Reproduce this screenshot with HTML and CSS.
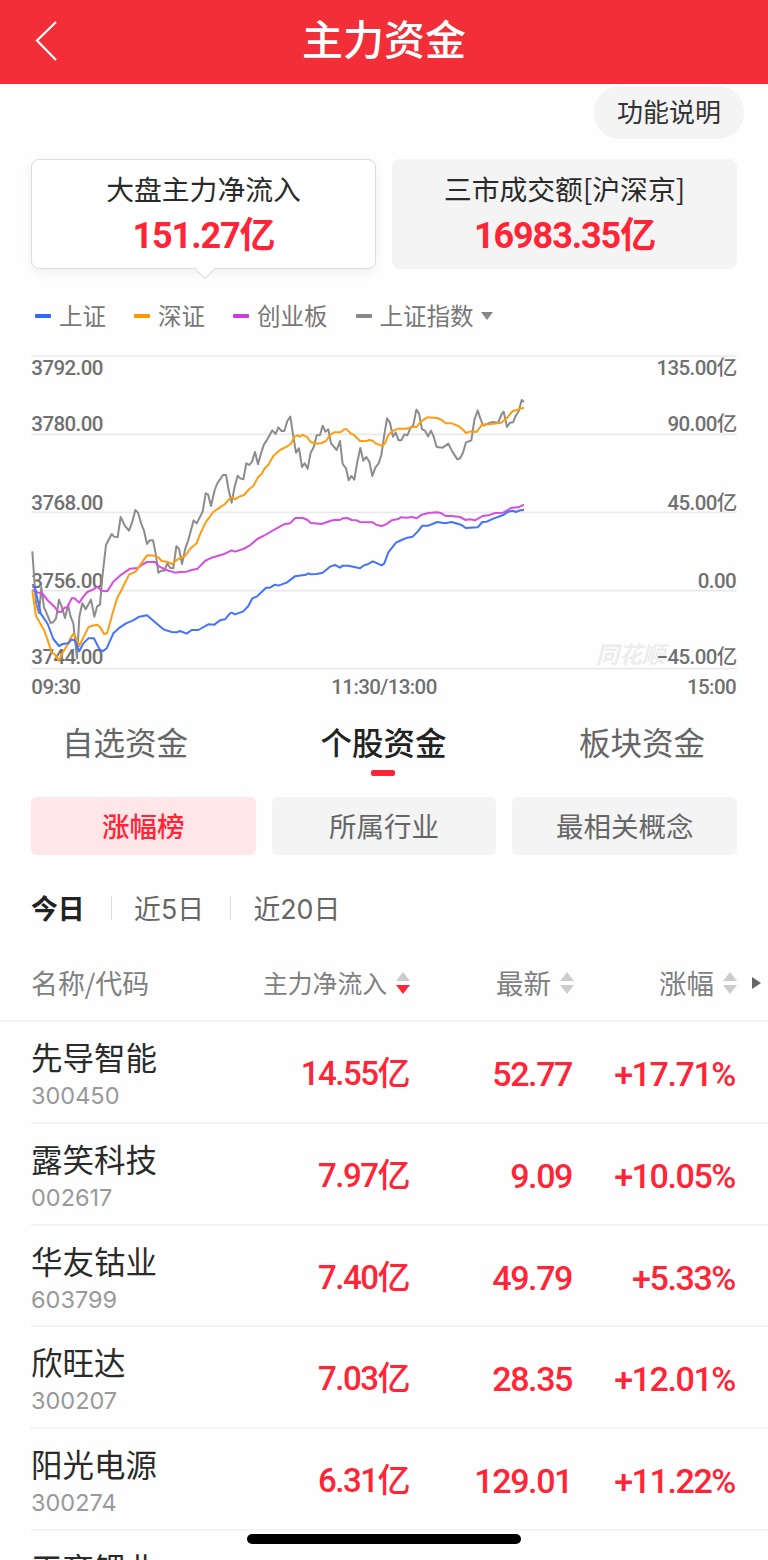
FILE: index.html
```
<!DOCTYPE html>
<html lang="zh-CN">
<head>
    <meta charset="UTF-8">
    <meta name="viewport" content="width=device-width, initial-scale=1.0">
    <title>主力资金</title>
    <link rel="stylesheet" href="styles.css">
</head>
<body>

<div class="page">
    <header class="header">
        <svg class="back" width="24" height="42" viewBox="0 0 24 42"><path d="M22 2 L3 20.500 L22 40"/></svg>
        <h1>主力资金</h1>
    </header>

    <div class="help"><button class="btn-help">功能说明</button></div>

    <!-- Summary cards -->
    <div class="cards">
        <div class="card active">
            <div class="card-title">大盘主力净流入</div>
            <div class="card-value">151.27亿</div>
        </div>
        <div class="card">
            <div class="card-title">三市成交额[沪深京]</div>
            <div class="card-value">16983.35亿</div>
        </div>
    </div>

    <div class="legend">
        <span class="item blue">上证</span>
        <span class="item orange">深证</span>
        <span class="item purple">创业板</span>
        <span class="item gray">上证指数<i class="caret"></i></span>
    </div>

    <!-- Chart -->
    <svg class="chart" width="768" height="360" viewBox="0 0 2304 1080">
        <g class="grid">
            <path d="M94 48H2210M94 283H2210M94 517H2210M94 752H2210M94 986H2210"/>
        </g>
        <text class="watermark" x="1788" y="968">同花顺</text>
        <g class="labels">
            <text x="94" y="104">3792.00</text>
            <text x="94" y="274">3780.00</text>
            <text x="94" y="509">3768.00</text>
            <text x="94" y="743">3756.00</text>
            <text x="94" y="972">3744.00</text>
            <text x="94" y="1061">09:30</text>
        </g>
        <g class="labels middle">
            <text x="1152" y="1061">11:30/13:00</text>
        </g>
        <g class="labels end">
            <text x="2210" y="104">135.00亿</text>
            <text x="2210" y="274">90.00亿</text>
            <text x="2210" y="509">45.00亿</text>
            <text x="2208" y="743">0.00</text>
            <text x="2210" y="972">−45.00亿</text>
            <text x="2208" y="1061">15:00</text>
        </g>
        <polyline class="line line-gray" points="97,634 103,720 108,790 117,820 124,742 132,802 140,820 152,849 160,846 168,835 177,779 186,803 195,834 204,795 212,830 220,850 231,955 238,830 247,790 257,808 273,779 283,830 291,800 300,794 306,720 318,615 335,582 342,590 353,591 362,531 375,558 387,572 397,545 406,510 414,518 424,552 432,572 441,612 449,601 459,601 467,640 475,698 484,692 493,692 502,670 510,683 520,685 529,619 537,626 546,672 556,625 565,600 581,541 590,550 608,515 617,460 624,463 633,498 644,450 652,430 669,405 678,405 686,450 695,488 704,440 713,407 721,415 730,418 739,370 748,375 756,365 765,336 774,373 783,340 792,313 802,298 817,271 827,282 835,262 845,273 853,273 862,243 871,230 880,290 888,338 897,325 906,381 914,370 923,386 932,338 941,322 950,286 960,285 968,257 976,275 985,268 993,310 1010,330 1020,303 1028,372 1038,385 1046,421 1054,408 1063,419 1072,365 1081,324 1090,362 1099,351 1108,365 1117,408 1126,383 1136,370 1144,345 1152,290 1161,235 1170,248 1179,290 1187,278 1196,301 1204,301 1213,283 1222,286 1231,265 1240,255 1249,209 1257,220 1266,268 1275,272 1284,289 1293,272 1301,290 1310,321 1328,323 1345,311 1357,335 1372,358 1380,355 1389,338 1398,307 1414,301 1423,240 1433,211 1442,238 1450,257 1465,250 1480,246 1494,249 1505,222 1511,215 1521,261 1530,248 1539,247 1547,228 1556,214 1565,180 1572,186"/>
        <polyline class="line line-purple" points="97,750 113,757 128,762 145,783 165,802 175,816 184,815 194,803 202,802 215,775 223,775 238,788 250,770 262,756 280,748 292,740 305,752 322,754 340,725 360,707 390,686 413,684 430,672 441,666 465,666 478,680 500,690 525,698 540,696 560,695 575,690 593,686 615,663 635,653 670,643 695,631 705,635 730,627 750,616 772,597 790,588 830,565 852,553 870,550 886,534 908,534 923,540 932,549 965,552 990,543 1005,539 1020,540 1028,535 1042,534 1055,540 1070,541 1080,546 1118,547 1130,555 1145,558 1158,553 1175,541 1195,537 1202,532 1220,533 1237,531 1250,535 1265,524 1285,519 1312,517 1325,520 1337,528 1355,528 1380,531 1397,540 1410,538 1425,541 1448,528 1465,526 1485,519 1510,518 1535,503 1555,502 1572,494"/>
        <polyline class="line line-orange" points="97,752 108,828 118,845 133,872 143,900 154,935 166,945 177,962 188,938 202,915 212,893 221,881 231,900 238,918 250,893 265,862 276,857 292,854 302,864 312,882 321,880 329,853 337,822 352,773 363,753 387,704 407,695 424,670 441,646 463,647 475,652 485,663 500,665 517,672 530,660 555,648 572,625 590,610 600,583 617,547 640,516 660,502 675,492 685,480 696,471 705,478 718,470 732,465 748,447 760,438 774,412 785,402 793,387 806,373 820,348 840,330 860,320 872,312 884,290 893,286 900,290 907,284 922,292 932,306 950,311 965,309 978,303 990,285 1002,277 1022,277 1033,268 1040,268 1052,280 1062,285 1080,303 1100,303 1108,300 1118,302 1126,310 1145,317 1155,310 1165,285 1178,273 1195,266 1218,266 1240,260 1250,261 1262,245 1282,232 1312,234 1325,240 1338,250 1355,250 1375,258 1388,268 1398,279 1412,274 1430,276 1446,254 1475,252 1504,248 1520,235 1538,213 1552,210 1560,206 1572,203"/>
        <polyline class="line line-blue" points="97,740 105,742 112,775 122,820 143,852 160,897 177,918 188,912 205,910 215,898 225,902 238,934 250,910 265,895 282,895 292,915 300,930 310,933 320,925 340,880 360,862 378,850 398,842 418,830 441,826 460,842 490,868 515,876 530,877 540,873 560,881 575,870 595,870 625,853 643,854 660,841 675,838 690,820 695,818 705,823 730,814 745,798 757,775 770,770 798,743 810,743 825,734 835,737 860,728 885,709 918,704 925,700 932,703 950,702 968,698 990,680 1005,675 1020,683 1028,677 1045,677 1080,685 1090,677 1105,672 1118,664 1132,670 1145,676 1153,670 1165,637 1188,608 1205,600 1222,593 1238,590 1253,575 1267,557 1285,557 1312,546 1335,550 1355,546 1383,554 1397,564 1433,562 1447,546 1460,545 1480,536 1510,525 1525,515 1538,512 1547,516 1560,511 1572,510"/>
    </svg>

    <!-- Tabs -->
    <nav class="tabs">
        <span>自选资金</span>
        <span class="active">个股资金</span>
        <span>板块资金</span>
    </nav>

    <div class="chips">
        <button class="chip active">涨幅榜</button>
        <button class="chip">所属行业</button>
        <button class="chip">最相关概念</button>
    </div>

    <div class="periods">
        <span class="active">今日</span>
        <span>近5日</span>
        <span>近20日</span>
    </div>

    <!-- Stock list -->
    <div class="row table-head">
        <div class="title">名称/代码</div>
        <div class="num flow">主力净流入<svg class="sort desc" width="14" height="24" viewBox="0 0 14 24"><path class="up" d="M7 1L14 10H0Z"/><path class="down" d="M7 23L14 14H0Z"/></svg></div>
        <div class="num">最新<svg class="sort" width="14" height="24" viewBox="0 0 14 24"><path class="up" d="M7 1L14 10H0Z"/><path class="down" d="M7 23L14 14H0Z"/></svg></div>
        <div class="num">涨幅<svg class="sort" width="14" height="24" viewBox="0 0 14 24"><path class="up" d="M7 1L14 10H0Z"/><path class="down" d="M7 23L14 14H0Z"/></svg></div>
        <i class="more"></i>
    </div>

    <div class="list">
        <div class="row stock">
            <div><div class="name">先导智能</div><div class="code">300450</div></div>
            <div class="num flow">14.55亿</div><div class="num">52.77</div><div class="num">+17.71%</div>
        </div>
        <div class="row stock">
            <div><div class="name">露笑科技</div><div class="code">002617</div></div>
            <div class="num flow">7.97亿</div><div class="num">9.09</div><div class="num">+10.05%</div>
        </div>
        <div class="row stock">
            <div><div class="name">华友钴业</div><div class="code">603799</div></div>
            <div class="num flow">7.40亿</div><div class="num">49.79</div><div class="num">+5.33%</div>
        </div>
        <div class="row stock">
            <div><div class="name">欣旺达</div><div class="code">300207</div></div>
            <div class="num flow">7.03亿</div><div class="num">28.35</div><div class="num">+12.01%</div>
        </div>
        <div class="row stock">
            <div><div class="name">阳光电源</div><div class="code">300274</div></div>
            <div class="num flow">6.31亿</div><div class="num">129.01</div><div class="num">+11.22%</div>
        </div>
        <div class="row stock">
            <div><div class="name">天齐锂业</div></div>
        </div>
    </div>

    <div class="home-bar"></div>
</div>

</body>
</html>
```
FILE: styles.css
```
* {
    box-sizing: border-box;
}
body {
    margin: 0;
    font-family: "Noto Sans CJK SC", sans-serif;
    background-color: #fefefe;
    color: #2a2a2a;
}
button {
    font-family: inherit;
    border: none;
    padding: 0;
}
.page {
    position: relative;
    width: 768px;
    height: 1560px;
    overflow: hidden;
}
.header {
    height: 84px;
    display: grid;
    grid-template-columns: 96px 1fr 96px;
    align-items: center;
    background-color: #f22f38;
    color: #fff;
}
.header h1 {
    margin: 0;
    padding-bottom: 10px;
    text-align: center;
    font-size: 41px;
    line-height: 56px;
    font-weight: 500;
}
.back {
    margin-left: 34px;
    margin-top: -2px;
    fill: none;
    stroke: #fff;
    stroke-width: 2.2;
}
.help {
    height: 75px;
    padding: 2px 24px 0;
    text-align: right;
}
.btn-help {
    width: 150px;
    height: 53px;
    padding-bottom: 4px;
    border-radius: 26px;
    background-color: #f4f4f4;
    color: #333;
    font-size: 26px;
    line-height: 49px;
}
.cards {
    display: grid;
    grid-template-columns: 1fr 1fr;
    gap: 16px;
    padding: 0 31px;
}
.card {
    position: relative;
    height: 110px;
    padding-top: 8px;
    border: 1px solid #f4f4f4;
    border-radius: 8px;
    background-color: #f4f4f4;
    text-align: center;
}
.card.active {
    background-color: #fff;
    border-color: #ddd;
    box-shadow: 0 4px 12px rgba(0, 0, 0, 0.06);
}
.card.active::after {
    content: "";
    position: absolute;
    left: 165px;
    bottom: -8px;
    width: 15px;
    height: 15px;
    background-color: #fff;
    border: solid #ddd;
    border-width: 0 1px 1px 0;
    transform: rotate(45deg);
}
.card-title {
    font-size: 27.8px;
    line-height: 40px;
}
.card-value {
    color: #ff2436;
    font-family: Roboto, "Noto Sans CJK SC", sans-serif;
    font-size: 36px;
    line-height: 56px;
    font-weight: 700;
    letter-spacing: -1.1px;
}
.legend {
    display: flex;
    height: 71px;
    padding: 21px 35px 0;
    gap: 28px;
    color: #777;
    font-size: 23.5px;
    line-height: 46px;
}
.item {
    display: flex;
    align-items: center;
}
.item::before {
    content: "";
    width: 16px;
    height: 4px;
    margin-right: 8px;
    margin-top: 2px;
    border-radius: 1px;
    background-color: currentColor;
}
.blue::before { background-color: #3366ff; }
.orange::before { background-color: #ff9500; }
.purple::before { background-color: #cb3cdb; }
.gray::before { background-color: #888; }
.caret {
    margin-left: 7px;
    margin-top: 2px;
    border: 6px solid transparent;
    border-top: 8px solid #888;
    border-bottom: 0;
}
.chart {
    display: block;
}
.grid path {
    fill: none;
    stroke: #eaeaea;
    stroke-width: 5;
}
.labels {
    fill: #707070;
    font-family: Roboto, "Noto Sans CJK SC", sans-serif;
    font-size: 61.5px;
    font-weight: 500;
    letter-spacing: -1.8px;
}
.middle { text-anchor: middle; }
.end { text-anchor: end; }
.watermark {
    fill: #ededed;
    font-size: 69px;
    font-weight: 700;
    font-style: italic;
}
.line {
    fill: none;
    stroke-width: 6;
    stroke-linejoin: round;
}
.line-gray { stroke: #8c8c8c; }
.line-purple { stroke: #d44fe0; }
.line-orange { stroke: #ff9d12; }
.line-blue { stroke: #4272ff; }
.tabs {
    display: flex;
    justify-content: space-between;
    height: 97px;
    padding: 16px 63px 0 62px;
    color: #666;
    font-size: 31.5px;
    line-height: 50px;
}
.tabs .active {
    position: relative;
    color: #222;
    font-weight: 500;
}
.tabs .active::after {
    content: "";
    position: absolute;
    left: 51px;
    top: 54px;
    width: 24px;
    height: 6px;
    border-radius: 2px;
    background-color: #ff2436;
}
.chips {
    display: grid;
    grid-template-columns: repeat(3, 1fr);
    gap: 16px;
    padding: 0 31px;
}
.chip {
    height: 58px;
    padding-bottom: 2px;
    border-radius: 6px;
    background-color: #f4f4f4;
    color: #666;
    font-size: 27.5px;
}
.chip.active {
    background-color: #ffe7e9;
    color: #ff2436;
    font-weight: 500;
}
.periods {
    display: flex;
    align-items: center;
    height: 91px;
    padding: 14px 31px 0;
    color: #666;
    font-family: Inter, "Noto Sans CJK SC", sans-serif;
    font-size: 26.8px;
}
.periods span + span {
    display: flex;
    align-items: center;
}
.periods span + span::before {
    content: "";
    width: 1px;
    height: 24px;
    margin: 0 22px 0 26.5px;
    background-color: #ddd;
}
.periods .active {
    color: #222;
    font-weight: 700;
}
.row {
    display: grid;
    grid-template-columns: 179px 200px 163px 163px;
    margin-left: 31px;
}
.num {
    text-align: right;
}
.table-head {
    align-items: center;
    height: 76px;
    margin-left: 0;
    padding-left: 31px;
    grid-template-columns: 179px 200px 164px 163px 1fr;
    border-bottom: 2px solid #f1f1f1;
    color: #808080;
    font-size: 27.5px;
    line-height: 40px;
}
.table-head .title {
    font-size: 26.9px;
}
.table-head .num {
    display: flex;
    justify-content: flex-end;
    align-items: center;
    margin-top: -2px;
}
.table-head .flow {
    font-size: 24.8px;
}
.sort {
    margin-left: 9px;
    margin-top: 2px;
    fill: #ccc;
}
.sort.desc .down {
    fill: #ff2436;
}
.more {
    width: 0;
    margin-left: 15px;
    border: 6px solid transparent;
    border-left: 9px solid #666;
    border-right: 0;
}
.stock {
    height: 101.75px;
    border-bottom: 2px solid #f3f3f3;
}
.stock .num {
    color: #ff2436;
    font-family: Roboto, "Noto Sans CJK SC", sans-serif;
    font-size: 34px;
    font-weight: 500;
    line-height: 104px;
    letter-spacing: -1.4px;
    padding-right: 1px;
}
.stock .flow {
    font-size: 33px;
    letter-spacing: -1.5px;
}
.name {
    padding-top: 11px;
    font-size: 31.5px;
    line-height: 46px;
}
.stock:last-child .name {
    padding-top: 13px;
}
.code {
    padding-top: 2px;
    color: #999;
    font-family: Inter, sans-serif;
    font-size: 23.5px;
    line-height: 30px;
}
.home-bar {
    position: absolute;
    left: 247px;
    bottom: 16px;
    width: 274px;
    height: 10px;
    border-radius: 5px;
    background-color: #000;
}
```
